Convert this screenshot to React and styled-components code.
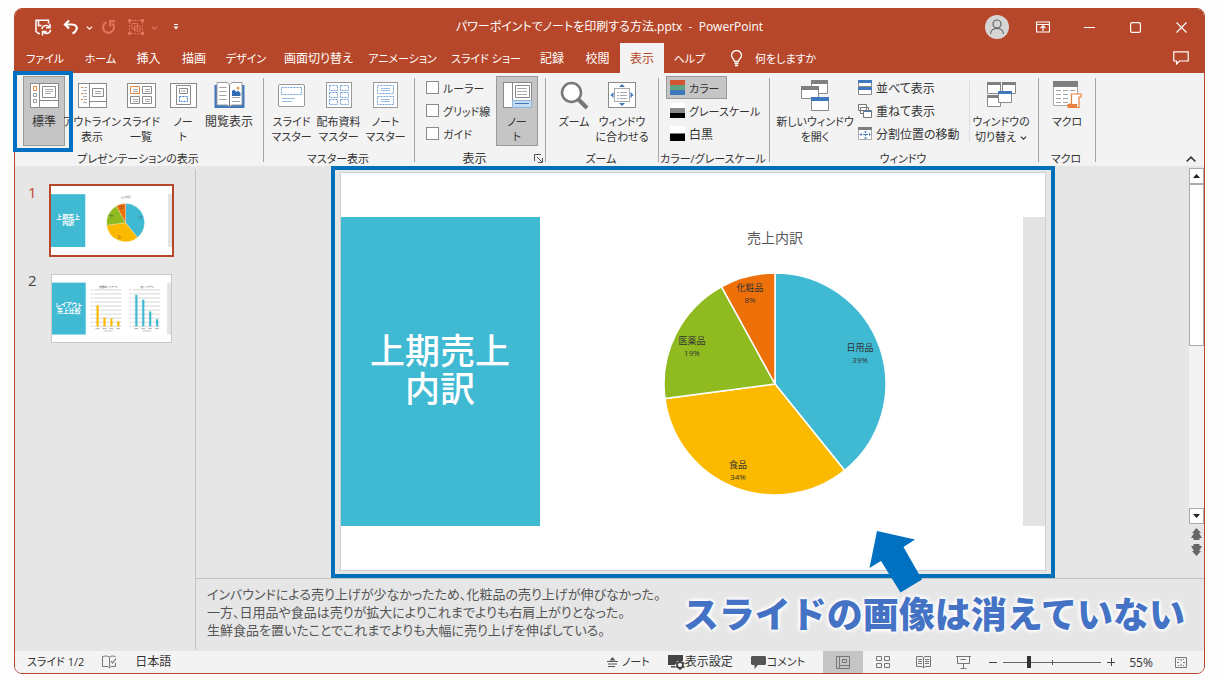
import React, { useState } from 'react';
import styled, { createGlobalStyle } from 'styled-components';

const GlobalStyle = createGlobalStyle`
  *, *::before, *::after {
    box-sizing: border-box;
  }

  body {
    margin: 0;
    background: #fefefe;
  }

  body, button, input, textarea {
    font-family: 'Open Sans', 'Noto Sans CJK JP', sans-serif;
    font-size: 12px;
    font-feature-settings: 'palt';
    color: #333;
  }

  button {
    padding: 0;
    border: none;
    background: none;
    cursor: pointer;
  }

  svg {
    display: block;
    flex: none;
  }
`;

const Page = styled.div`
  display: flex;
  min-height: 100vh;
  padding: 8px 15px 8px 14px;
`;

const Window = styled.div`
  flex: 1;
  min-width: 0;
  display: flex;
  flex-direction: column;
  border: 1px solid #b7472a;
  border-radius: 8px;
  background: #e6e6e6;
`;

/* title bar */

const TitleBar = styled.header`
  display: grid;
  grid-template-columns: 1fr auto 1fr;
  align-items: center;
  height: 34px;
  background: #b7472a;
  border-radius: 7px 7px 0 0;
  color: #fff;
`;

const QuickAccess = styled.div`
  display: flex;
  align-items: center;
  padding-left: 18px;
`;

const QuickButton = styled.button`
  display: flex;
  align-items: center;
  justify-content: center;
  width: ${props => props.$width}px;
  height: 24px;
  color: ${props => (props.disabled ? '#e2735a' : '#fff')};
`;

const DocTitle = styled.div`
  line-height: 36px;
  white-space: nowrap;
`;

const WindowControls = styled.div`
  display: flex;
  justify-content: flex-end;
  align-items: center;
`;

const ControlButton = styled.button`
  display: flex;
  align-items: center;
  justify-content: center;
  width: 46px;
  height: 30px;
  color: #fff;
`;

/* tabs */

const TabBar = styled.nav`
  display: flex;
  height: 30px;
  background: #b7472a;
`;

const Tab = styled.button`
  width: ${props => props.$width}px;
  font-size: ${props => (props.$compact ? 11 : 12)}px;
  line-height: 32px;
  white-space: nowrap;
  color: ${props => (props.$active ? '#b7472a' : '#fff')};
  background: ${props => (props.$active ? '#f3f3f3' : 'transparent')};
`;

const TellMe = styled.button`
  display: flex;
  align-items: center;
  gap: 12px;
  padding-left: 15px;
  color: #fff;
  font-size: 11px;
`;

const CommentsButton = styled(ControlButton)`
  margin-left: auto;
`;

/* ribbon */

const Ribbon = styled.div`
  display: flex;
  min-height: 93px;
  background: #f3f3f3;
`;

const Group = styled.section`
  display: flex;
  flex-direction: column;
  flex: none;
  gap: 5px;
  width: ${props => props.$width}px;
  padding-top: 3px;
`;

const GroupBody = styled.div`
  display: flex;
  height: 70px;
  padding-left: ${props => props.$pad}px;
`;

const GroupFooter = styled.div`
  display: flex;
  align-items: center;
  height: 15px;
  padding-right: 2px;
`;

const GroupName = styled.div`
  flex: 1;
  display: flex;
  justify-content: center;
  white-space: nowrap;
  font-size: ${props => (props.$compact ? 11 : 12)}px;
  line-height: 15px;
`;

const Separator = styled.div`
  width: 1px;
  margin: 5px 0 4px;
  background: ${props => (props.$light ? '#dcdcdc' : '#a6a6a6')};
`;

const BigButton = styled.button`
  position: relative;
  display: flex;
  flex-direction: column;
  align-items: center;
  flex: none;
  gap: 3px;
  width: ${props => props.$width}px;
  height: 70px;
  padding-top: 2px;
  border: 1px solid ${props => (props.$active ? '#9a9a9a' : 'transparent')};
  background: ${props => (props.$active ? '#c5c5c5' : 'transparent')};
  font-size: ${props => (props.$compact ? 11 : 12)}px;
  line-height: 15px;
  white-space: pre;
`;

const BigIcon = styled.span`
  display: flex;
  align-items: center;
  height: 32px;
`;

const InlineIcon = styled.span`
  display: inline-block;
  padding-left: 4px;
`;

const ButtonHighlight = styled.span`
  position: absolute;
  z-index: 2;
  inset: -6px -9px -7px -11px;
  border: 4px solid #0070c0;
  pointer-events: none;
`;

const Stack = styled.div`
  display: flex;
  flex-direction: column;
  width: ${props => props.$width}px;
`;

const CheckLabel = styled.label`
  display: flex;
  align-items: center;
  gap: 4px;
  height: 23px;
  font-size: 11px;
  white-space: nowrap;
`;

const Check = styled.input`
  appearance: none;
  flex: none;
  width: 13px;
  height: 13px;
  margin: 0;
  border: 1px solid #8a8a8a;
  background: #fff;

  &:checked {
    box-shadow: inset 0 0 0 3px #fff;
    background: #444;
  }
`;

const SmallButton = styled.button`
  display: flex;
  align-items: center;
  align-self: flex-start;
  gap: 4px;
  height: 23px;
  padding: 0 6px 0 ${props => props.$pad}px;
  border: 1px solid ${props => (props.$active ? '#9a9a9a' : 'transparent')};
  background: ${props => (props.$active ? '#c5c5c5' : 'transparent')};
  font-size: ${props => (props.$compact ? 11 : 12)}px;
  white-space: nowrap;
`;

const CollapseButton = styled.button`
  align-self: flex-end;
  margin-left: auto;
  padding: 0 8px 2px;
`;

/* workspace */

const Workspace = styled.main`
  flex: 1;
  display: flex;
`;

const Thumbnails = styled.aside`
  display: flex;
  flex-direction: column;
  gap: 19px;
  flex: none;
  width: 180px;
  padding: 20px 0 0 13px;
`;

const ThumbRow = styled.div`
  display: flex;
`;

const ThumbNumber = styled.span`
  width: 23px;
  font-size: 15px;
  line-height: 12px;
  color: ${props => (props.$active ? '#c0492c' : '#444')};
`;

const ThumbButton = styled.button`
  width: 121px;
  height: 69px;
  background: #fff;
  border: ${props => (props.$active ? 'none' : '1px solid #c8c8c8')};
  outline: ${props => (props.$active ? '2px solid #b7472a' : 'none')};
`;

const PaneDivider = styled.div`
  width: 1px;
  margin: 3px 0 2px;
  background: #c3c3c3;
`;

const Editor = styled.div`
  position: relative;
  flex: 1;
  min-width: 0;
  display: flex;
  flex-direction: column;
`;

const StageRow = styled.div`
  flex: 1;
  display: flex;
`;

const Stage = styled.div`
  flex: 1;
  display: flex;
  align-items: flex-end;
  justify-content: center;
`;

const SlideHighlight = styled.div`
  width: 100%;
  max-width: 724px;
  padding: 2px 5px 3px;
  border: 4px solid #0070b8;
`;

const Slide = styled.div`
  display: flex;
  align-items: center;
  width: 100%;
  aspect-ratio: 706 / 398;
  border: 1px solid #cfcfcf;
  background: #fff;
`;

const SlideTitle = styled.h1`
  display: flex;
  align-items: center;
  justify-content: center;
  flex: none;
  width: 199px;
  height: 78%;
  margin: 0;
  padding-bottom: 4px;
  background: #40b9d3;
  color: #fff;
  font-feature-settings: normal;
  font-size: 35px;
  font-weight: 500;
  line-height: 38px;
  text-align: center;
  white-space: pre;
`;

const SlideChart = styled.div`
  flex: 1;
  min-width: 0;
`;

const SlideStripe = styled.div`
  width: 22px;
  height: 78%;
  background: #e3e3e3;
`;

const ScrollColumn = styled.div`
  display: flex;
  flex-direction: column;
  align-items: center;
  width: 15px;
  padding: 2px 0 22px;
`;

const ScrollButton = styled.button`
  display: flex;
  align-items: center;
  justify-content: center;
  width: 15px;
  height: 16px;
  border: 1px solid #ababab;
  background: #fff;
`;

const ScrollTrack = styled.div`
  flex: 1;
  width: 100%;
  background: #f3f3f3;
`;

const ScrollThumb = styled.div`
  height: 50%;
  border: 1px solid #ababab;
  background: #fff;
`;

const JumpButton = styled.button`
  padding-top: 4px;
`;

const Notes = styled.textarea`
  display: block;
  width: 100%;
  height: 73px;
  padding: 6px 11px;
  border: none;
  border-top: 1px solid #c3c3c3;
  outline: none;
  resize: none;
  overflow: hidden;
  background: transparent;
  color: #555;
  font-size: 13px;
  line-height: 18px;
`;

const Callout = styled.div`
  position: absolute;
  right: 19px;
  bottom: 12px;
  color: #4472c4;
  font-feature-settings: normal;
  font-size: 36px;
  font-weight: 900;
  line-height: 48px;
  white-space: nowrap;
  text-shadow: 0 0 3px #fff, 0 0 4px #fff, 0 0 5px #fff, 0 0 6px #fff;
`;

const CalloutArrow = styled.svg`
  position: absolute;
  right: 278px;
  bottom: 56px;
`;

/* status bar */

const StatusBar = styled.footer`
  display: flex;
  align-items: center;
  height: 22px;
  padding: 0 3px 0 12px;
  border-radius: 0 0 7px 7px;
  background: #f3f3f3;
`;

const StatusButton = styled.button`
  display: flex;
  align-items: center;
  gap: ${props => props.$gap || 0}px;
  margin-right: 18px;
  font-size: ${props => (props.$compact ? 11 : 12)}px;
  line-height: 24px;
  white-space: nowrap;
`;

const Spacer = styled.div`
  flex: 1;
`;

const ViewButton = styled.button`
  display: flex;
  align-items: center;
  justify-content: center;
  width: 40px;
  height: 22px;
  background: ${props => (props.$active ? '#c5c5c5' : 'transparent')};
`;

const ZoomButton = styled.button`
  width: 20px;
  height: 20px;
  display: flex;
  align-items: center;
  justify-content: center;
`;

const ZoomSlider = styled.input`
  appearance: none;
  width: 98px;
  height: 12px;
  margin: 0;
  background:
    linear-gradient(#555, #555) center / 1px 5px no-repeat,
    linear-gradient(#666, #666) center / 100% 1px no-repeat;

  &::-webkit-slider-thumb {
    appearance: none;
    width: 4px;
    height: 12px;
    background: #333;
  }
`;

const ZoomValue = styled.button`
  width: 40px;
  text-align: center;
`;

/* icons */

const SaveIcon = () => (
  <svg width="17" height="17" viewBox="0 0 17 17" fill="none" stroke="currentColor" strokeWidth="1.5">
    <path d="M5 14.500H3.500L1 12.500V1.200H13.500V4.500M3.500 1.500V6.500H6.500" />
    <path d="M6.800 10A4.200 4.200 0 0 1 14.300 8.200M15 4.800V8.800H11M15.700 10.800A4.200 4.200 0 0 1 8.300 12.800M7.500 16.500V12.500H11.500" />
  </svg>
);

const UndoIcon = () => (
  <svg width="16" height="16" viewBox="0 0 16 16" fill="none" stroke="currentColor" strokeWidth="2.200">
    <path d="M6 1.500L2 5.500L6 9.500M2 5.500H9C13 5.500 14.500 8 13.500 10.500C12.800 12.500 11 14 9.500 14.500" />
  </svg>
);

const RedoIcon = () => (
  <svg width="16" height="16" viewBox="0 0 16 16" fill="none" stroke="currentColor" strokeWidth="2.200">
    <path d="M8 2.200H14M9.200 2V7.500M11.500 4.500A5.500 5.500 0 1 1 5.500 3.200" />
  </svg>
);

const GroupIcon = () => (
  <svg width="16" height="16" viewBox="0 0 16 16" fill="none" stroke="currentColor">
    <path d="M3 1.500H13M3 14.500H13M1.500 3V13M14.500 3V13" strokeDasharray="2 1" />
    <path d="M4 4.500H9.500V10H4ZM6.500 7H12V12H6.500Z" />
    <path d="M0 1.500H3M13 1.500H16M0 14.500H3M13 14.500H16" strokeWidth="3" />
  </svg>
);

const Chevron = ({ up, size = 7 }) => (
  <svg width={size} height={size} viewBox="0 0 8 8" fill="none" stroke="currentColor" strokeWidth="1.300">
    <path d={up ? 'M0.500 6L4 2.500L7.500 6' : 'M1 3L4 6L7 3'} />
  </svg>
);

const CustomizeIcon = () => (
  <svg width="6" height="6" viewBox="0 0 6 6" fill="currentColor">
    <path d="M1 0H5V1H1ZM0.500 2.500H5.500L3 5.500Z" />
  </svg>
);

const AvatarIcon = () => (
  <svg width="24" height="24" viewBox="0 0 24 24" fill="none" stroke="#5f6468" strokeWidth="1.200">
    <circle cx="12" cy="12" r="12" fill="#d5d5d5" stroke="none" />
    <circle cx="12" cy="9" r="4" />
    <path d="M5.500 19C6 11.500 18 11.500 18.500 19" />
  </svg>
);

const RibbonDisplayIcon = () => (
  <svg width="14" height="12" viewBox="0 0 14 12" fill="none" stroke="currentColor">
    <path d="M0.500 1H13.500V11H0.500ZM0.500 3.500H13.500M7 10V5M4.500 7L7 4.800L9.500 7" strokeWidth="1.200" />
  </svg>
);

const MinimizeIcon = () => (
  <svg width="11" height="11" viewBox="0 0 11 11" stroke="currentColor"><path d="M0 5.500H11" /></svg>
);

const MaximizeIcon = () => (
  <svg width="11" height="11" viewBox="0 0 11 11" fill="none" stroke="currentColor" strokeWidth="1.200">
    <rect x="0.600" y="0.600" width="9.800" height="9.800" rx="1.500" />
  </svg>
);

const CloseIcon = () => (
  <svg width="11" height="11" viewBox="0 0 11 11" stroke="currentColor" strokeWidth="1.200">
    <path d="M0.500 0.500L10.500 10.500M10.500 0.500L0.500 10.500" />
  </svg>
);

const BulbIcon = () => (
  <svg width="13" height="17" viewBox="0 0 13 17" fill="none" stroke="currentColor" strokeWidth="1.300">
    <path d="M4.500 11.500C4.500 9 1.500 8.500 1.500 5.500A5 5 0 0 1 11.500 5.500C11.500 8.500 8.500 9 8.500 11.500ZM4.500 13.500H8.500M5 15.500H8" />
  </svg>
);

const CommentIcon = () => (
  <svg width="16" height="14" viewBox="0 0 16 14" fill="none" stroke="currentColor" strokeWidth="1.200">
    <path d="M0.800 0.800H15.200V10H6.500L3.500 13V10H0.800Z" />
  </svg>
);

const NormalViewIcon = () => (
  <svg width="29" height="25" viewBox="0 0 29 25" fill="none" stroke="#8a8a8a">
    <rect x="0.500" y="0.500" width="28" height="24" fill="#fff" />
    <path d="M9.500 1V24M10 17.500H28" />
    <path d="M3.500 3.500H6.500V7.500H3.500Z" stroke="#e8823a" />
    <path d="M3.500 10.500H6.500V13.500H3.500ZM3.500 16.500H6.500V19.500H3.500Z" stroke="#999" />
    <path d="M12.500 3.500H25.500V14.500H12.500Z" />
    <path d="M15 6.500H23M15 8.500H23M15 10.500H21" stroke="#aaa" />
  </svg>
);

const OutlineViewIcon = () => (
  <svg width="29" height="25" viewBox="0 0 29 25" fill="none" stroke="#8a8a8a">
    <rect x="0.500" y="0.500" width="28" height="24" fill="#fff" />
    <path d="M11.500 1V24M12 18.500H28M14.500 5.500H25.500V13.500H14.500Z" />
    <path d="M3 4.500H5M3 10.500H5M3 16.500H5" stroke="#e8823a" />
    <path d="M6 4.500H9M5 7.500H9M6 10.500H9M5 13.500H9M6 16.500H9M5 19.500H9M17 8.500H23M17 10.500H23" stroke="#aaa" />
  </svg>
);

const SorterIcon = () => (
  <svg width="29" height="25" viewBox="0 0 29 25" fill="none" stroke="#8a8a8a">
    <rect x="0.500" y="0.500" width="28" height="24" fill="#fff" />
    <path d="M3.500 3.500H12.500V10.500H3.500Z" stroke="#e8823a" />
    <path d="M15.500 3.500H24.500V10.500H15.500ZM3.500 13.500H12.500V20.500H3.500ZM15.500 13.500H24.500V20.500H15.500Z" />
    <path d="M6 6.500H11M6 8.500H11M18 6.500H23M18 8.500H23M6 16.500H11M6 18.500H11M18 16.500H23M18 18.500H23" stroke="#aaa" />
  </svg>
);

const NotesPageIcon = () => (
  <svg width="27" height="25" viewBox="0 0 27 25" fill="none" stroke="#8a8a8a">
    <rect x="0.500" y="0.500" width="26" height="24" fill="#fff" />
    <path d="M6.500 2.500H20.500V21.500H6.500ZM9.500 5.500H17.500V10.500H9.500Z" />
    <path d="M11 8H16" stroke="#aaa" />
    <path d="M9.500 13.500H17.500V18.500H9.500Z" stroke="#3f83c9" strokeDasharray="2 1" />
  </svg>
);

const ReadingIcon = () => (
  <svg width="31" height="28" viewBox="0 0 31 28" fill="none">
    <path d="M0.500 4H30.500V27H0.500Z" fill="#3f78bd" />
    <path d="M3 1.500H13L15.500 3.500L18 1.500H28V24H18L15.500 25.500L13 24H3Z" fill="#fff" stroke="#999" />
    <path d="M15.500 3.500V25" stroke="#777" />
    <path d="M5 6.500H12.500M5 10.500H12.500M5 14.500H12.500M5 18.500H12.500M18 16.500H26M18 20.500H26" stroke="#a5a5a5" />
    <path d="M18 15V10L20 8.500L22.500 11L24 9.500L26.500 12V15Z" fill="#2f6cb3" />
    <circle cx="24" cy="7" r="1.500" fill="#e8a04a" />
  </svg>
);

const SlideMasterIcon = () => (
  <svg width="27" height="23" viewBox="0 0 27 23" fill="none">
    <rect x="0.500" y="0.500" width="26" height="22" rx="1.500" fill="#fff" stroke="#999" />
    <path d="M3.500 3.500H23.500V10.500H3.500Z" stroke="#6fa0d8" strokeDasharray="2 1" />
    <path d="M3.500 14.500H17M3.500 17.500H14" stroke="#9bbde2" />
  </svg>
);

const HandoutMasterIcon = () => (
  <svg width="26" height="26" viewBox="0 0 26 26" fill="none">
    <rect x="0.500" y="0.500" width="25" height="25" fill="#fff" stroke="#999" />
    <path
      d="M3.500 3.500H11.500V8.500H3.500ZM14.500 3.500H22.500V8.500H14.500ZM3.500 10.500H11.500V15.500H3.500ZM14.500 10.500H22.500V15.500H14.500ZM3.500 17.500H11.500V22.500H3.500ZM14.500 17.500H22.500V22.500H14.500Z"
      stroke="#6fa0d8"
      strokeDasharray="2 1"
    />
  </svg>
);

const NotesMasterIcon = () => (
  <svg width="25" height="26" viewBox="0 0 25 26" fill="none">
    <rect x="0.500" y="0.500" width="24" height="25" fill="#fff" stroke="#999" />
    <path d="M4.500 3.500H20.500V11.500H4.500ZM4.500 14.500H20.500V22.500H4.500Z" stroke="#6fa0d8" strokeDasharray="2 1" />
    <path d="M8 6.500H17M8 8.500H17M8 17.500H17M8 19.500H17" stroke="#9bbde2" />
  </svg>
);

const NotesPaneIcon = () => (
  <svg width="29" height="26" viewBox="0 0 29 26" fill="none" stroke="#8a8a8a">
    <rect x="0.500" y="0.500" width="28" height="25" fill="#fff" />
    <path d="M9.500 1V25" />
    <path d="M12.500 3.500H26.500V15.500H12.500Z" />
    <path d="M14 6.500H24M14 9.500H24M14 12.500H24" stroke="#aaa" />
    <rect x="9.500" y="18.500" width="19" height="7" fill="#c5daf0" stroke="#8fb3d9" />
    <path d="M12 21.500H26" stroke="#3f78bd" />
  </svg>
);

const MagnifierIcon = () => (
  <svg width="29" height="29" viewBox="0 0 29 29" fill="none" stroke="#777">
    <circle cx="11.500" cy="11.500" r="9.500" fill="#fff" strokeWidth="2.500" />
    <path d="M18.500 18.500L27 27" strokeWidth="4" />
  </svg>
);

const FitIcon = () => (
  <svg width="28" height="26" viewBox="0 0 28 26" fill="none">
    <rect x="0.500" y="0.500" width="27" height="25" fill="#fff" stroke="#8a8a8a" />
    <rect x="6.500" y="6.500" width="15" height="13" stroke="#aaa" />
    <path d="M9 10.500H11M12 10.500H19M9 13.500H11M12 13.500H19M9 16.500H11M12 16.500H19" stroke="#aaa" />
    <path d="M11 5L14 2L17 5ZM11 21L14 24L17 21ZM5.500 10L2.500 13L5.500 16ZM22.500 10L25.500 13L22.500 16Z" fill="#3f78bd" />
  </svg>
);

const SwatchIcon = ({ colors }) => (
  <svg width="15" height="15" viewBox="0 0 15 15">
    {colors.map((color, i) => (
      <rect key={color} y={i * (15 / colors.length)} width="15" height={15 / colors.length} fill={color} />
    ))}
  </svg>
);

const NewWindowIcon = () => (
  <svg width="28" height="31" viewBox="0 0 28 31" fill="#fff" stroke="#8a8a8a">
    <path d="M10.500 0.500H26.500V13.500H10.500Z" />
    <path d="M10 0H27V4H10Z" fill="#7f7f7f" stroke="none" />
    <path d="M0.500 6.500H17.500V18.500H0.500Z" />
    <path d="M0 6H18V10H0Z" fill="#7f7f7f" stroke="none" />
    <path d="M10.500 17.500H27.500V30.500H10.500Z" />
    <path d="M10 17H28V21H10Z" fill="#3f78bd" stroke="none" />
  </svg>
);

const ArrangeIcon = () => (
  <svg width="14" height="15" viewBox="0 0 14 15" fill="#fff" stroke="#8a8a8a">
    <path d="M0.500 0.500H13.500V6.500H0.500ZM0.500 8.500H13.500V14.500H0.500Z" />
    <path d="M0 0H14V3H0ZM0 7H14V10H0Z" fill="#3f78bd" stroke="none" />
  </svg>
);

const CascadeIcon = () => (
  <svg width="14" height="14" viewBox="0 0 14 14" fill="#fff" stroke="#777">
    <path d="M0.500 0.500H8.500V6.500H0.500ZM2.500 3.500H10.500V9.500H2.500Z" />
    <path d="M5.500 6.500H13.500V13.500H5.500Z" />
    <path d="M6 7.500H13" stroke="#3f78bd" />
  </svg>
);

const SplitIcon = () => (
  <svg width="14" height="13" viewBox="0 0 14 13" fill="none">
    <path d="M0.500 0.500H13.500V12.500H0.500Z" fill="#fff" stroke="#aaa" />
    <path d="M0 0H14V3H0Z" fill="#7f7f7f" />
    <path d="M7.500 4V12M2 7.500H12" stroke="#3f78bd" strokeDasharray="2 1" />
    <path d="M6 5.500L7.500 4L9 5.500M6 10.500L7.500 12L9 10.500M3.500 6L2 7.500L3.500 9M11 6L12.500 7.500L11 9" stroke="#6fa0d8" />
  </svg>
);

const SwitchWindowIcon = () => (
  <svg width="29" height="26" viewBox="0 0 29 26" fill="#fff" stroke="#8a8a8a">
    <path d="M0.500 0.500H13.500V11.500H0.500ZM15.500 0.500H28.500V11.500H15.500ZM0.500 13.500H13.500V24.500H0.500Z" />
    <path d="M0 0H14V3H0ZM15 0H29V3H15ZM0 13H14V16H0Z" fill="#7f7f7f" stroke="none" />
    <path d="M11.500 9.500H24.500V20.500H11.500Z" />
    <path d="M11 9H25V12H11Z" fill="#3f78bd" stroke="none" />
  </svg>
);

const MacroIcon = () => (
  <svg width="29" height="28" viewBox="0 0 29 28" fill="none">
    <path d="M0.500 0.500H24.500V24.500H0.500Z" fill="#fff" stroke="#aaa" />
    <path d="M0 0H25V6H0Z" fill="#7f7f7f" />
    <path d="M3 9.500H8M10 9.500H15M17 9.500H22M3 13.500H8M10 13.500H15M3 17.500H8M10 17.500H15M3 21.500H8M10 21.500H15" stroke="#a5a5a5" />
    <path d="M18.500 13H28V16H26V26.500H16.500V23H18.500Z" fill="#fff" stroke="#e8823a" strokeWidth="1.200" />
    <path d="M14.500 23H24V27H14.500Z" fill="#e8823a" />
  </svg>
);

const LauncherIcon = () => (
  <svg width="9" height="9" viewBox="0 0 9 9" fill="none" stroke="#555">
    <path d="M0.500 7V0.500H7M3 3L8 8M8.500 4V8.500H4" />
  </svg>
);

const JumpIcon = ({ down }) => (
  <svg width="11" height="12" viewBox="0 0 11 12" fill="#666">
    <path
      transform={down ? 'rotate(180 5.500 6)' : undefined}
      d="M5.500 0L10 5H8L11 10H8.500V12H2.500V10H0L3 5H1Z"
    />
  </svg>
);

const TriangleIcon = ({ down }) => (
  <svg width="7" height="4" viewBox="0 0 7 4" fill="#222">
    <path d={down ? 'M0 0H7L3.500 4Z' : 'M0 4L3.500 0L7 4Z'} />
  </svg>
);

const ProofIcon = () => (
  <svg width="15" height="14" viewBox="0 0 15 14" fill="none" stroke="#777">
    <path d="M7.500 2C6 0.800 3 0.800 0.500 1.500V11.500H6L7.500 13L9 11.500H13.500V8M7.500 2V12.500M7.500 2C9 0.800 11 0.800 13.500 1.500" />
    <path d="M9 6L10.500 8L14 3.500" strokeWidth="1.200" />
  </svg>
);

const NotesToggleIcon = () => (
  <svg width="11" height="10" viewBox="0 0 11 10" fill="#555">
    <path d="M5.500 0L8.500 3.500H2.500ZM0 4H11V5H0ZM1 6.500H10V7.500H1ZM1 9H8V10H1Z" />
  </svg>
);

const DisplaySettingsIcon = () => (
  <svg width="17" height="15" viewBox="0 0 17 15" fill="#444">
    <path d="M0 0H15V6H9L7 10H0ZM3 11H7V12.500H3Z" />
    <circle cx="12" cy="10" r="3" fill="#f3f3f3" stroke="#444" strokeWidth="1.800" />
    <path d="M12 5V7M12 13V15M7.500 7.500L9.500 9M14.500 11L16.500 12.500M16.500 7.500L14.500 9M7.500 12.500L9.500 11" stroke="#444" strokeWidth="1.500" />
  </svg>
);

const CommentFilledIcon = () => (
  <svg width="15" height="13" viewBox="0 0 15 13" fill="#555">
    <path d="M1 0H14L15 1V8L14 9H7L3.500 13V9H1L0 8V1Z" />
  </svg>
);

const StatusNormalIcon = () => (
  <svg width="14" height="13" viewBox="0 0 14 13" fill="none" stroke="#777">
    <path d="M0.500 0.500H13.500V12.500H0.500ZM3.500 0.500V12.500M3.500 9.500H13.500M6.500 3.500H10.500V6.500H6.500Z" />
  </svg>
);

const StatusSorterIcon = () => (
  <svg width="14" height="12" viewBox="0 0 14 12" fill="none" stroke="#777">
    <path d="M0.500 0.500H5.500V4.500H0.500ZM8.500 0.500H13.500V4.500H8.500ZM0.500 7.500H5.500V11.500H0.500ZM8.500 7.500H13.500V11.500H8.500Z" />
  </svg>
);

const StatusReadingIcon = () => (
  <svg width="15" height="13" viewBox="0 0 15 13" fill="none" stroke="#777">
    <path d="M7.500 1.500L6 0.500H0.500V10.500H6L7.500 12L9 10.500H14.500V0.500H9ZM7.500 1.500V12M2 3.500H6M2 5.500H6M2 7.500H6M9 3.500H13M9 5.500H13M9 7.500H13" />
  </svg>
);

const StatusShowIcon = () => (
  <svg width="15" height="13" viewBox="0 0 15 13" fill="none" stroke="#777">
    <path d="M0 0.500H15M1.500 0.500V7.500H13.500V0.500M7.500 7.500V12M4.500 12.500H10.500M4.500 3.500H10" />
  </svg>
);

const StatusFitIcon = () => (
  <svg width="12" height="11" viewBox="0 0 12 11" fill="none" stroke="#777">
    <path d="M0.500 0.500H11.500V10.500H0.500ZM6 2V4M6 7V9M2 5.500H4M8 5.500H10M3 2.500H4M8 2.500H9M3 8.500H4M8 8.500H9" />
  </svg>
);

const ZoomSign = ({ plus }) => (
  <svg width="8" height="8" viewBox="0 0 8 8" stroke="#444">
    <path d={plus ? 'M0 4.500H8M4.500 0V8' : 'M0 4.500H8'} />
  </svg>
);

/* slide content */

const sales = [
  { name: '日用品', percent: 39, share: 0.392, color: '#40b9d3', x: 320, y: 175 },
  { name: '食品', percent: 34, share: 0.337, color: '#fbb900', x: 198, y: 292 },
  { name: '医薬品', percent: 19, share: 0.191, color: '#8fba20', x: 152, y: 168 },
  { name: '化粧品', percent: 8, share: 0.08, color: '#ed7009', x: 210, y: 115 },
];

const PieChart = () => {
  const cx = 235;
  const cy = 211;
  const r = 111;
  let turned = 0;
  const point = t => `${cx + r * Math.sin(2 * Math.PI * t)} ${cy - r * Math.cos(2 * Math.PI * t)}`;

  return (
    <g textAnchor="middle">
      <text x={cx} y="70" fontSize="14" fill="#595959">売上内訳</text>
      {sales.map(slice => {
        const start = turned;
        turned += slice.share;
        return (
          <path
            key={slice.name}
            d={`M${cx} ${cy}L${point(start)}A${r} ${r} 0 0 1 ${point(turned)}Z`}
            fill={slice.color}
            stroke="#fff"
            strokeWidth="1.500"
          />
        );
      })}
      {sales.map(slice => (
        <text key={slice.name} fontSize="9" fill="#333" x={slice.x} y={slice.y + 3}>
          {slice.name}
          <tspan x={slice.x} dy="12" fontSize="8">{slice.percent}%</tspan>
        </text>
      ))}
    </g>
  );
};

const ThumbFrame = ({ lines, children }) => (
  <svg width="100%" height="100%" viewBox="0 0 706 397">
    <rect y="45" width="200" height="308" fill="#40b9d3" />
    <rect x="683" y="45" width="23" height="308" fill="#e3e3e3" />
    <text fill="#fff" fontSize="35" fontWeight="700" textAnchor="middle">
      <tspan x="100" y="189">{lines[0]}</tspan>
      <tspan x="100" y="227">{lines[1]}</tspan>
    </text>
    {children}
  </svg>
);

const BarChart = ({ x, title, color, values }) => (
  <g>
    <text x={x + 85} y="76" fontSize="15" fill="#555" textAnchor="middle">{title}</text>
    {[0, 1, 2, 3, 4, 5, 6, 7, 8, 9].map(i => (
      <path key={i} d={`M${x} ${88 + i * 24}H${x + 164}M${x - 22} ${88 + i * 24}H${x - 8}`} stroke="#c4c4c4" strokeWidth="4" />
    ))}
    {values.map((value, i) => (
      <g key={i}>
        <rect x={x + 14 + i * 41} y={304 - value} width="13" height={value} fill={color} />
        <path d={`M${x + 8 + i * 41} 318h24`} stroke="#888" strokeWidth="4" />
      </g>
    ))}
    <path d={`M${x + 56} 332h54`} stroke="#aaa" strokeWidth="4" />
  </g>
);

const tabs = [
  { label: 'ファイル', width: 60, compact: true },
  { label: 'ホーム', width: 51, compact: true },
  { label: '挿入', width: 45 },
  { label: '描画', width: 46 },
  { label: 'デザイン', width: 58, compact: true },
  { label: '画面切り替え', width: 87 },
  { label: 'アニメーション', width: 81, compact: true },
  { label: 'スライド ショー', width: 86, compact: true },
  { label: '記録', width: 46 },
  { label: '校閲', width: 45 },
  { label: '表示', width: 44 },
  { label: 'ヘルプ', width: 51, compact: true },
];

const initialNotes = [
  'インバウンドによる売り上げが少なかったため、化粧品の売り上げが伸びなかった。',
  '一方、日用品や食品は売りが拡大によりこれまでよりも右肩上がりとなった。',
  '生鮮食品を置いたことでこれまでよりも大幅に売り上げを伸ばしている。',
].join('\n');

const RibbonButton = ({ icon, label, width, active, compact, children }) => (
  <BigButton $width={width} $active={active} $compact={compact}>
    <BigIcon>{icon}</BigIcon>
    <span>{label}</span>
    {children}
  </BigButton>
);

const RibbonGroup = ({ name, width, pad, launcher, compact, children }) => (
  <>
    <Group $width={width}>
      <GroupBody $pad={pad}>{children}</GroupBody>
      <GroupFooter>
        <GroupName $compact={compact}>{name}</GroupName>
        {launcher && <button aria-label="グリッドの設定"><LauncherIcon /></button>}
      </GroupFooter>
    </Group>
    <Separator />
  </>
);

const App = () => {
  const [activeTab, setActiveTab] = useState('表示');
  const [notes, setNotes] = useState(initialNotes);
  const [zoom, setZoom] = useState(25);

  return (
    <>
      <GlobalStyle />
      <Page>
        <Window>
          <TitleBar>
            <QuickAccess>
              <QuickButton $width={20} aria-label="保存"><SaveIcon /></QuickButton>
              <QuickButton $width={36} aria-label="元に戻す"><UndoIcon /></QuickButton>
              <QuickButton $width={0} aria-label="元に戻す履歴"><Chevron /></QuickButton>
              <QuickButton $width={40} aria-label="やり直し" disabled><RedoIcon /></QuickButton>
              <QuickButton $width={14} aria-label="グループ化" disabled><GroupIcon /></QuickButton>
              <QuickButton $width={22} aria-label="グループ化オプション" disabled><Chevron /></QuickButton>
              <QuickButton $width={22} aria-label="カスタマイズ"><CustomizeIcon /></QuickButton>
            </QuickAccess>
            <DocTitle>パワーポイントでノートを印刷する方法.pptx&nbsp; -&nbsp; PowerPoint</DocTitle>
            <WindowControls>
              <ControlButton aria-label="アカウント"><AvatarIcon /></ControlButton>
              <ControlButton aria-label="リボンの表示オプション"><RibbonDisplayIcon /></ControlButton>
              <ControlButton aria-label="最小化"><MinimizeIcon /></ControlButton>
              <ControlButton aria-label="最大化"><MaximizeIcon /></ControlButton>
              <ControlButton aria-label="閉じる"><CloseIcon /></ControlButton>
            </WindowControls>
          </TitleBar>

          <TabBar>
            {tabs.map(tab => (
              <Tab
                key={tab.label}
                $width={tab.width}
                $compact={tab.compact}
                $active={tab.label === activeTab}
                onClick={() => setActiveTab(tab.label)}
              >
                {tab.label}
              </Tab>
            ))}
            <TellMe><BulbIcon />何をしますか</TellMe>
            <CommentsButton aria-label="コメント"><CommentIcon /></CommentsButton>
          </TabBar>

          <Ribbon>
            <RibbonGroup name="プレゼンテーションの表示" width={248} pad={8} compact>
              <RibbonButton icon={<NormalViewIcon />} label="標準" width={42} active>
                <ButtonHighlight />
              </RibbonButton>
              <RibbonButton icon={<OutlineViewIcon />} label={'アウトライン\n表示'} width={54} compact />
              <RibbonButton icon={<SorterIcon />} label={'スライド\n一覧'} width={44} compact />
              <RibbonButton icon={<NotesPageIcon />} label={'ノー\nト'} width={40} compact />
              <RibbonButton icon={<ReadingIcon />} label="閲覧表示" width={52} />
            </RibbonGroup>

            <RibbonGroup name="マスター表示" width={150} pad={4} compact>
              <RibbonButton icon={<SlideMasterIcon />} label={'スライド\nマスター'} width={47} compact />
              <RibbonButton icon={<HandoutMasterIcon />} label={'配布資料\nマスター'} width={47} compact />
              <RibbonButton icon={<NotesMasterIcon />} label={'ノート\nマスター'} width={47} compact />
            </RibbonGroup>

            <RibbonGroup name="表示" width={130} pad={11} launcher>
              <Stack $width={70}>
                <CheckLabel><Check type="checkbox" />ルーラー</CheckLabel>
                <CheckLabel><Check type="checkbox" />グリッド線</CheckLabel>
                <CheckLabel><Check type="checkbox" />ガイド</CheckLabel>
              </Stack>
              <RibbonButton icon={<NotesPaneIcon />} label={'ノー\nト'} width={42} active compact />
            </RibbonGroup>

            <RibbonGroup name="ズーム" width={112} pad={4} compact>
              <RibbonButton icon={<MagnifierIcon />} label="ズーム" width={48} compact />
              <RibbonButton icon={<FitIcon />} label={'ウィンドウ\nに合わせる'} width={48} compact />
            </RibbonGroup>

            <RibbonGroup name="カラー/グレースケール" width={110} pad={7} compact>
              <Stack $width={100}>
                <SmallButton $pad={3} $active $compact>
                  <SwatchIcon colors={['#d2562f', '#5fa284', '#3f78bd']} />カラー
                </SmallButton>
                <SmallButton $pad={3} $compact>
                  <SwatchIcon colors={['#fff', '#8a8a8a', '#000']} />グレースケール
                </SmallButton>
                <SmallButton $pad={3}>
                  <SwatchIcon colors={['#fff', '#000']} />白黒
                </SmallButton>
              </Stack>
            </RibbonGroup>

            <RibbonGroup name="ウィンドウ" width={268} pad={4} compact>
              <RibbonButton icon={<NewWindowIcon />} label={'新しいウィンドウ\nを開く'} width={82} compact />
              <Stack $width={113}>
                <SmallButton $pad={1}><ArrangeIcon />並べて表示</SmallButton>
                <SmallButton $pad={1}><CascadeIcon />重ねて表示</SmallButton>
                <SmallButton $pad={1}><SplitIcon />分割位置の移動</SmallButton>
              </Stack>
              <Separator $light />
              <RibbonButton
                icon={<SwitchWindowIcon />}
                label={<>ウィンドウの{'\n'}切り替え<InlineIcon><Chevron /></InlineIcon></>}
                width={62}
                compact
              />
            </RibbonGroup>

            <RibbonGroup name="マクロ" width={56} pad={6} compact>
              <RibbonButton icon={<MacroIcon />} label="マクロ" width={44} compact />
            </RibbonGroup>

            <CollapseButton aria-label="リボンを折りたたむ"><Chevron up size={10} /></CollapseButton>
          </Ribbon>

          <Workspace>
            <Thumbnails>
              <ThumbRow>
                <ThumbNumber $active>1</ThumbNumber>
                <ThumbButton $active aria-label="スライド 1">
                  <ThumbFrame lines={['上期売上', '内訳']}>
                    <g transform="translate(200 0)"><PieChart /></g>
                  </ThumbFrame>
                </ThumbButton>
              </ThumbRow>
              <ThumbRow>
                <ThumbNumber>2</ThumbNumber>
                <ThumbButton aria-label="スライド 2">
                  <ThumbFrame lines={['レイアウト', '売上比較']}>
                    <BarChart x={250} title="変更前レイアウト" color="#fbb900" values={[124, 52, 46, 30]} />
                    <BarChart x={480} title="新レイアウト" color="#40b9d3" values={[186, 158, 88, 42]} />
                  </ThumbFrame>
                </ThumbButton>
              </ThumbRow>
            </Thumbnails>
            <PaneDivider />

            <Editor>
              <StageRow>
                <Stage>
                  <SlideHighlight>
                    <Slide>
                      <SlideTitle>{'上期売上\n内訳'}</SlideTitle>
                      <SlideChart>
                        <svg width="100%" viewBox="0 0 483 397"><PieChart /></svg>
                      </SlideChart>
                      <SlideStripe />
                    </Slide>
                  </SlideHighlight>
                </Stage>
                <ScrollColumn>
                  <ScrollButton aria-label="上へスクロール"><TriangleIcon /></ScrollButton>
                  <ScrollTrack><ScrollThumb /></ScrollTrack>
                  <ScrollButton aria-label="下へスクロール"><TriangleIcon down /></ScrollButton>
                  <JumpButton aria-label="前のスライド"><JumpIcon /></JumpButton>
                  <JumpButton aria-label="次のスライド"><JumpIcon down /></JumpButton>
                </ScrollColumn>
              </StageRow>
              <Notes aria-label="ノート" value={notes} onChange={e => setNotes(e.target.value)} />
              <CalloutArrow width="60" height="66" viewBox="0 0 60 66" fill="#0070c0">
                <path d="M11 2L49 10.500L37.500 18L56 50.500L34.500 63.500L15 32L3.500 39Z" />
              </CalloutArrow>
              <Callout>スライドの画像は消えていない</Callout>
            </Editor>
          </Workspace>

          <StatusBar>
            <StatusButton $compact>スライド 1/2</StatusButton>
            <StatusButton aria-label="校正"><ProofIcon /></StatusButton>
            <StatusButton>日本語</StatusButton>
            <Spacer />
            <StatusButton $gap={4} $compact><NotesToggleIcon />ノート</StatusButton>
            <StatusButton><DisplaySettingsIcon />表示設定</StatusButton>
            <StatusButton $gap={1} $compact><CommentFilledIcon />コメント</StatusButton>
            <ViewButton $active aria-label="標準表示"><StatusNormalIcon /></ViewButton>
            <ViewButton aria-label="スライド一覧"><StatusSorterIcon /></ViewButton>
            <ViewButton aria-label="閲覧表示"><StatusReadingIcon /></ViewButton>
            <ViewButton aria-label="スライドショー"><StatusShowIcon /></ViewButton>
            <ZoomButton aria-label="縮小"><ZoomSign /></ZoomButton>
            <ZoomSlider
              type="range"
              aria-label="ズーム"
              min="0"
              max="100"
              value={zoom}
              onChange={e => setZoom(Number(e.target.value))}
            />
            <ZoomButton aria-label="拡大"><ZoomSign plus /></ZoomButton>
            <ZoomValue>55%</ZoomValue>
            <ViewButton aria-label="ウィンドウに合わせる"><StatusFitIcon /></ViewButton>
          </StatusBar>
        </Window>
      </Page>
    </>
  );
};

export default App;
